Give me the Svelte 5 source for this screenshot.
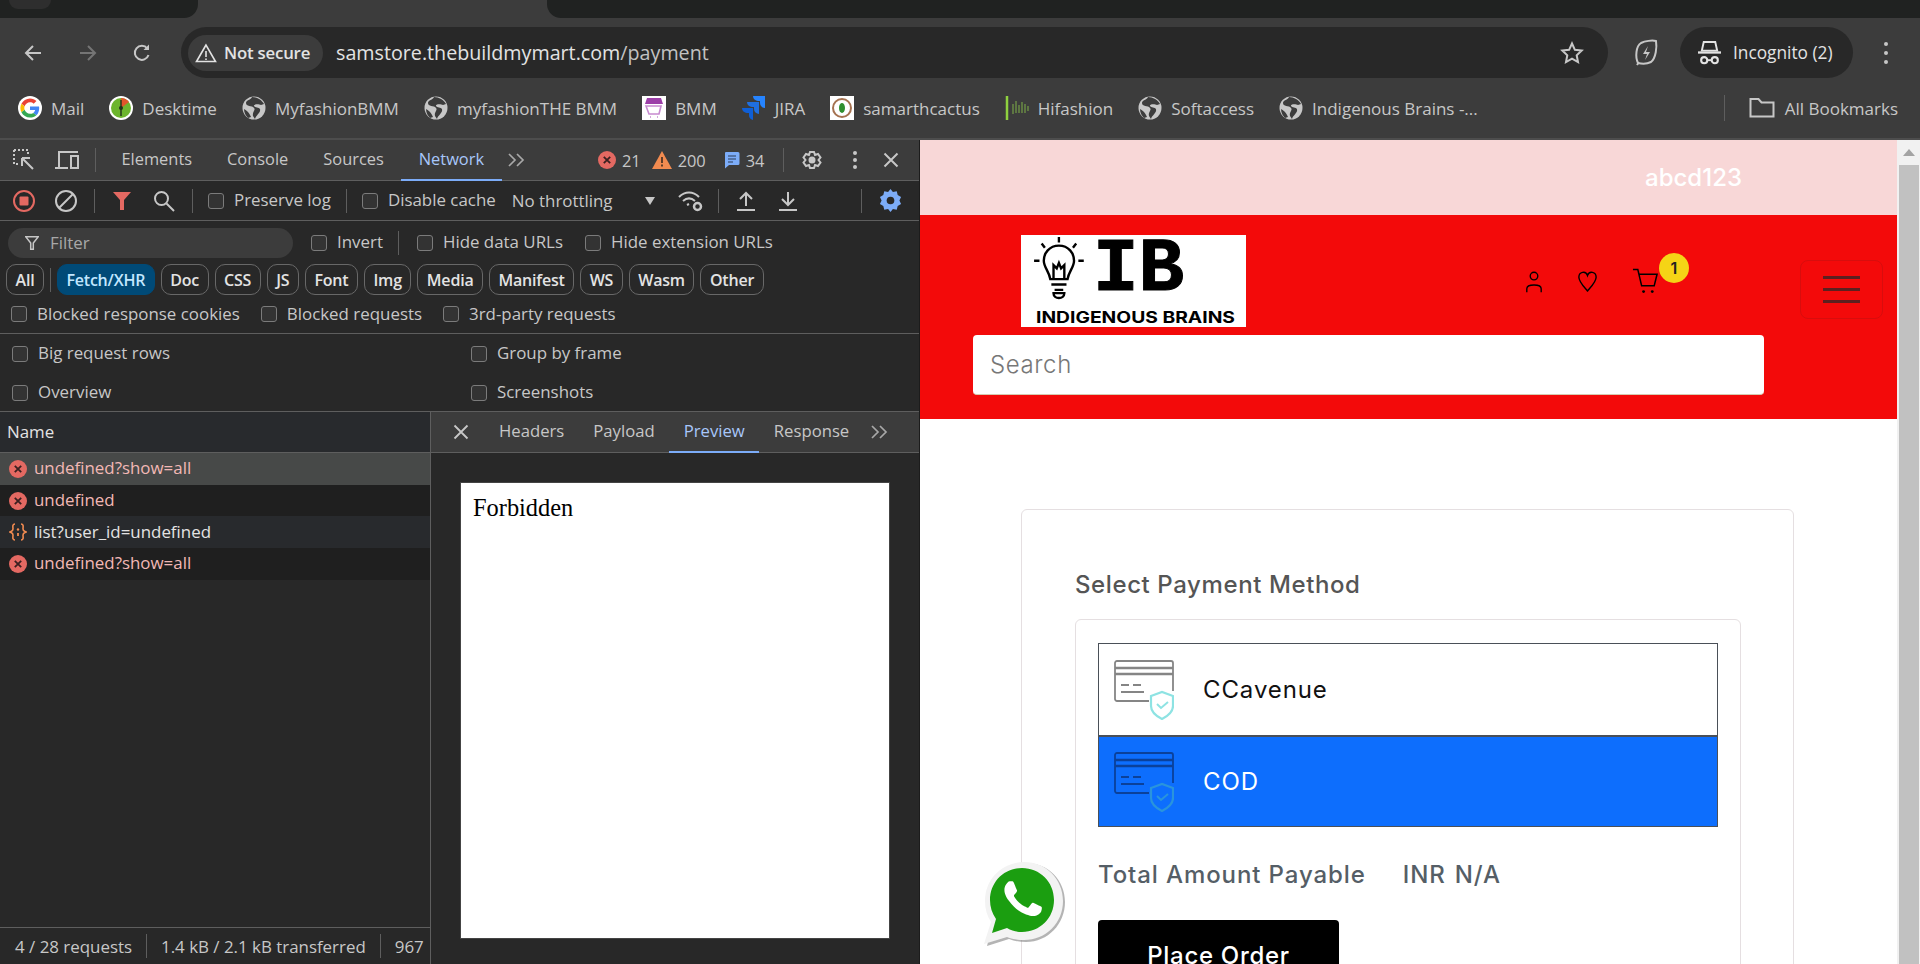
<script>
	let bookmarks = [
		{ icon: 'google', label: 'Mail' },
		{ icon: 'desktime', label: 'Desktime' },
		{ icon: 'globe', label: 'MyfashionBMM' },
		{ icon: 'globe', label: 'myfashionTHE BMM' },
		{ icon: 'bmm', label: 'BMM' },
		{ icon: 'jira', label: 'JIRA' },
		{ icon: 'sam', label: 'samarthcactus' },
		{ icon: 'hi', label: 'Hifashion' },
		{ icon: 'globe', label: 'Softaccess' },
		{ icon: 'globe', label: 'Indigenous Brains -...' }
	];
	let tabs = ['Elements', 'Console', 'Sources', 'Network'];
	let chips = ['Doc', 'CSS', 'JS', 'Font', 'Img', 'Media', 'Manifest', 'WS', 'Wasm', 'Other'];
	let requests = [
		{ name: 'undefined?show=all', kind: 'err', tone: 'sel' },
		{ name: 'undefined', kind: 'err', tone: 'odd' },
		{ name: 'list?user_id=undefined', kind: 'json', tone: 'even' },
		{ name: 'undefined?show=all', kind: 'err', tone: 'odd' }
	];
	let detail = ['Headers', 'Payload', 'Preview', 'Response'];
</script>

{#snippet errIcon()}
	<svg class="ic18" viewBox="0 0 18 18"><circle cx="9" cy="9" r="9" fill="#e46962"/><path d="M5.8 5.8l6.4 6.4M12.2 5.8l-6.4 6.4" stroke="#3a2020" stroke-width="1.8" fill="none"/></svg>
{/snippet}

{#snippet chevrons()}
	<svg class="chev" viewBox="0 0 18 14"><path d="M2 1l6 6-6 6M10 1l6 6-6 6" fill="none" stroke="#a8a8a8" stroke-width="1.7"/></svg>
{/snippet}

{#snippet card(dark)}
	<svg class="cardicon" viewBox="0 0 60 60" fill="none">
		<g stroke={dark ? '#0b419a' : '#858585'} stroke-width="1.8">
			<path d="M35 41H3a2 2 0 0 1-2-2V3a2 2 0 0 1 2-2h54a2 2 0 0 1 2 2v28"/>
			<path d="M1 8h58M1 14h58" stroke-width="2.4"/>
			<path d="M7 25h8M19 25h8M7 32h23" stroke-width="2"/>
		</g>
		<path d="M37 36l11-4 11 4v10c0 6-5 10-11 13-6-3-11-7-11-13z" stroke={dark ? '#2a94dc' : '#8ee3e3'} stroke-width="2.2"/>
		<path d="M43 44l4 4 7-6" stroke={dark ? '#2a94dc' : '#8ee3e3'} stroke-width="2"/>
	</svg>
{/snippet}

<div class="screen">
	<header class="chrome">
		<div class="strip">
			<div class="tab-left"><span class="tab-ghost"></span></div>
			<div class="tab-active"></div>
			<div class="tab-right"></div>
		</div>
		<div class="toolbar">
			<svg class="nav back" viewBox="0 0 20 20"><path d="M18 10H3M10 3l-7 7 7 7" fill="none" stroke="#c7c7c7" stroke-width="2"/></svg>
			<svg class="nav fwd" viewBox="0 0 20 20"><path d="M2 10h15M10 3l7 7-7 7" fill="none" stroke="#757575" stroke-width="2"/></svg>
			<svg class="nav reload" viewBox="0 0 20 20"><path d="M16.5 12a7 7 0 1 1-1.2-6.5" fill="none" stroke="#c7c7c7" stroke-width="2"/><path d="M17 1.5V7h-5.5z" fill="#c7c7c7"/></svg>
			<div class="omnibox">
				<div class="secure">
					<svg class="warn" viewBox="0 0 22 20"><path d="M11 2L1.5 18.5h19z M11 8v6M11 15.5v1.5" fill="none" stroke="#e3e3e3" stroke-width="1.6"/></svg>
					<span>Not secure</span>
				</div>
				<span class="url">samstore.thebuildmymart.com<span class="path">/payment</span></span>
				<svg class="star" viewBox="0 0 24 24"><path d="M12 2.500l2.900 6.300 6.800.8-5 4.700 1.300 6.800-6-3.400-6 3.400 1.300-6.800-5-4.700 6.800-.8z" fill="none" stroke="#c7c7c7" stroke-width="2"/></svg>
			</div>
			<svg class="leaf" viewBox="0 0 24 28"><path d="M4 24C1 18 2 7 7 4c4-2 11-3 15-2 1 6 0 17-5 21-4 2-9 2-13 1zM3 26l2-3" fill="none" stroke="#c7c7c7" stroke-width="2"/><path d="M14 7l-5 8h4l-2 6 5-8h-4z" fill="#c7c7c7"/></svg>
			<div class="incognito">
				<svg class="spy" viewBox="0 0 24 26"><path d="M6 2h12l2 9H4z" fill="none" stroke="#e3e3e3" stroke-width="2"/><path d="M0 13h24" stroke="#e3e3e3" stroke-width="2.400"/><circle cx="6.500" cy="21" r="3.200" fill="none" stroke="#e3e3e3" stroke-width="2.200"/><circle cx="17.500" cy="21" r="3.200" fill="none" stroke="#e3e3e3" stroke-width="2.200"/><path d="M9.500 21h5" stroke="#e3e3e3" stroke-width="2"/></svg>
				<span>Incognito (2)</span>
			</div>
			<div class="kebab"><i></i><i></i><i></i></div>
		</div>
		<div class="bookmarks">
			{#each bookmarks as b}
				<div class="bm">
					{#if b.icon === 'google'}
						<svg class="bmi" viewBox="-6 -6 60 60"><circle cx="24" cy="24" r="30" fill="#fff"/><path fill="#EA4335" d="M24 9.5c3.54 0 6.71 1.22 9.21 3.6l6.85-6.85C35.9 2.38 30.47 0 24 0 14.62 0 6.51 5.38 2.56 13.22l7.98 6.19C12.43 13.72 17.74 9.5 24 9.5z"/><path fill="#4285F4" d="M46.98 24.55c0-1.57-.15-3.09-.38-4.55H24v9.02h12.94c-.58 2.96-2.26 5.48-4.78 7.18l7.73 6c4.51-4.18 7.09-10.36 7.09-17.65z"/><path fill="#FBBC05" d="M10.53 28.59c-.48-1.45-.76-2.99-.76-4.59s.27-3.14.76-4.59l-7.98-6.19C.92 16.46 0 20.12 0 24c0 3.88.92 7.54 2.56 10.78l7.97-6.19z"/><path fill="#34A853" d="M24 48c6.48 0 11.93-2.13 15.89-5.81l-7.73-6c-2.15 1.45-4.92 2.3-8.16 2.3-6.26 0-11.57-4.22-13.47-9.91l-7.98 6.19C6.51 42.62 14.62 48 24 48z"/></svg>
					{:else if b.icon === 'desktime'}
						<svg class="bmi" viewBox="0 0 24 24"><circle cx="12" cy="12" r="12" fill="#fff"/><circle cx="12" cy="12" r="10" fill="#6cb52d"/><path d="M12 12V2a10 10 0 0 1 8 4z" fill="#e0562c"/><path d="M12 4v16" stroke="#20301a" stroke-width="1.400"/><circle cx="12" cy="12" r="2" fill="#20301a"/></svg>
					{:else if b.icon === 'globe'}
						<svg class="bmi globe" viewBox="0 0 24 24"><circle cx="12" cy="12" r="11.500" fill="#c7c7c7"/><path d="M10 1c-1 3-6 3-6 6 0 4 6 2 8 5 2 2-2 4-1 8l2 3c1-4 6-6 5-10-1-2-5-1-6-3s5-2 7-1l3-1c-2-4-7-7-12-7zM2 13c2 1 5 3 7 8l-3 1c-2-2-4-5-4-9z" fill="#3c3c3c"/></svg>
					{:else if b.icon === 'bmm'}
						<svg class="bmi" viewBox="0 0 24 24"><rect width="24" height="24" fill="#fff"/><path d="M5 2h14l2 6H3z" fill="#9c3fa8"/><path d="M4 10h15l-2 8H7zM8 21h1M15 21h1" fill="none" stroke="#c78ad0" stroke-width="1.600"/></svg>
					{:else if b.icon === 'jira'}
						<svg class="bmi" viewBox="0 0 24 24"><path d="M23 0H11a5 5 0 0 0 5 5h2v2a5 5 0 0 0 5 5z" fill="#2684ff"/><path d="M17 6H5a5 5 0 0 0 5 5h2v2a5 5 0 0 0 5 5z" fill="#1f6fe0"/><path d="M11 12H0a5 5 0 0 0 5 5h2v2a5 5 0 0 0 4 5z" fill="#0f5fd6"/></svg>
					{:else if b.icon === 'sam'}
						<svg class="bmi" viewBox="0 0 24 24"><rect width="24" height="24" fill="#fff"/><circle cx="12" cy="12" r="9" fill="none" stroke="#a57250" stroke-width="2"/><ellipse cx="12" cy="12" rx="3" ry="5" fill="#2f8f2f"/></svg>
					{:else}
						<svg class="bmi" viewBox="0 0 24 24"><path d="M2 0v24" stroke="#8fd13f" stroke-width="2.500"/><path d="M8 8v10M11 5v12M14 9v8M17 6v11M20 8v9M23 10v5" stroke="#6c8f45" stroke-width="1.400"/></svg>
					{/if}
					<span>{b.label}</span>
				</div>
			{/each}
			<div class="bm-end">
				<i class="bm-sep"></i>
				<svg class="folder" viewBox="0 0 26 22"><path d="M1.500 19.500V2h8l3 3.500h12v14z" fill="none" stroke="#c7c7c7" stroke-width="2"/></svg>
				<span>All Bookmarks</span>
			</div>
		</div>
	</header>

	<div class="split">
		<section class="devtools">
			<div class="dt-top">
				<svg class="i-inspect" viewBox="0 0 22 22" fill="none"><path d="M1 1h14v4M1 1v14h4" stroke="#c7c7c7" stroke-width="2" stroke-dasharray="2 2"/><path d="M9 9h8M9 9v8M9 9l11 11" stroke="#c7c7c7" stroke-width="2"/></svg>
				<svg class="i-device" viewBox="0 0 24 20" fill="none"><path d="M4 18V2h19" stroke="#c7c7c7" stroke-width="2"/><path d="M0 18h13" stroke="#c7c7c7" stroke-width="2"/><rect x="16" y="6" width="7" height="12" stroke="#c7c7c7" stroke-width="2"/></svg>
				<i class="vsep first"></i>
				{#each tabs as t}
					<span class="dtab" class:on={t === 'Network'}>{t}</span>
				{/each}
				<span class="more">{@render chevrons()}</span>
				<div class="counts">
					{@render errIcon()}<span class="n">21</span>
					<svg class="tri" viewBox="0 0 20 18"><path d="M10 0l10 18H0z" fill="#f28b50"/><path d="M10 6v6M10 13.500v2" stroke="#3a2a20" stroke-width="1.600"/></svg><span class="n">200</span>
					<svg class="msg" viewBox="0 0 16 18"><path d="M2 1h12a1.500 1.500 0 0 1 1.500 1.500v10a1.500 1.500 0 0 1-1.500 1.500H5l-4 3.500V2a1 1 0 0 1 1-1z" fill="#7cacf8"/><path d="M4 5h8M4 8h8M4 11h5" stroke="#2a3a55" stroke-width="1.200"/></svg><span class="n last">34</span>
				</div>
				<i class="vsep tail"></i>
				<svg class="i-gear" viewBox="0 0 24 24" fill="none"><path d="M10 1h4l1 3 3-1 2.500 3.500-2 2.500 2 2.500L18 15l-3-1-1 3h-4l-1-3-3 1-2.500-3.500 2-2.500-2-2.500L6 3l3 1z" transform="translate(0 3)" stroke="#c7c7c7" stroke-width="2"/><circle cx="12" cy="12" r="3.500" fill="#c7c7c7"/></svg>
				<div class="dots"><i></i><i></i><i></i></div>
				<svg class="i-x" viewBox="0 0 16 16"><path d="M1.500 1.500l13 13M14.500 1.500l-13 13" stroke="#c7c7c7" stroke-width="2"/></svg>
			</div>

			<div class="dt-row r2">
				<svg class="i22" viewBox="0 0 22 22"><circle cx="11" cy="11" r="10" fill="none" stroke="#e46962" stroke-width="2"/><rect x="6.500" y="6.500" width="9" height="9" rx="1" fill="#e46962"/></svg>
				<svg class="i22 clear" viewBox="0 0 22 22" fill="none"><circle cx="11" cy="11" r="10" stroke="#c7c7c7" stroke-width="2"/><path d="M4 18L18 4" stroke="#c7c7c7" stroke-width="2"/></svg>
				<i class="vsep s1"></i>
				<svg class="funnel" viewBox="0 0 18 18"><path d="M0 0h18l-7 8v10H7V8z" fill="#e46962"/></svg>
				<svg class="i22 lens" viewBox="0 0 22 22" fill="none"><circle cx="8.500" cy="8.500" r="6.500" stroke="#c7c7c7" stroke-width="2"/><path d="M13.500 13.500L21 21" stroke="#c7c7c7" stroke-width="2"/></svg>
				<i class="vsep s2"></i>
				<label class="ck c1"><i></i>Preserve log</label>
				<i class="vsep s3"></i>
				<label class="ck c2"><i></i>Disable cache</label>
				<span class="throttle">No throttling</span>
				<span class="caret"></span>
				<svg class="wifi" viewBox="0 0 25 22" fill="none"><path d="M1 7c6-6 14-6 20 0M5 11c4-3.500 8-3.500 12 0M9 15l2-1" stroke="#c7c7c7" stroke-width="2"/><circle cx="19.500" cy="16.500" r="3.500" stroke="#c7c7c7" stroke-width="2.500"/></svg>
				<i class="vsep s4"></i>
				<svg class="arrow up" viewBox="0 0 18 20" fill="none"><path d="M9 15V2M3 8l6-6 6 6M0 19h18" stroke="#c7c7c7" stroke-width="2"/></svg>
				<svg class="arrow down" viewBox="0 0 18 20" fill="none"><path d="M9 1v13M3 8l6 6 6-6M0 19h18" stroke="#c7c7c7" stroke-width="2"/></svg>
				<i class="vsep s5"></i>
				<svg class="i-cog" viewBox="0 0 24 24"><path d="M12 0l2.500 3.200 4-.9 1 4 3.500 2-1.700 3.700 1.700 3.700-3.500 2-1 4-4-.9L12 24l-2.500-3.200-4 .9-1-4-3.500-2L2.700 12 1 8.300l3.500-2 1-4 4 .9z" fill="#7cacf8"/><circle cx="12" cy="12" r="4" fill="#282828"/></svg>
			</div>

			<div class="dt-row r3">
				<div class="filter">
					<svg viewBox="0 0 14 14"><path d="M.7.7h12.600L8.300 7v6.300H5.700V7z" fill="none" stroke="#c7c7c7" stroke-width="1.500"/></svg>
					<span>Filter</span>
				</div>
				<label class="ck c3"><i></i>Invert</label>
				<i class="vsep s6"></i>
				<label class="ck c4"><i></i>Hide data URLs</label>
				<label class="ck c5"><i></i>Hide extension URLs</label>
			</div>

			<div class="chips">
				<span class="chip">All</span>
				<i class="vsep chipsep"></i>
				<span class="chip active">Fetch/XHR</span>
				{#each chips as c}<span class="chip">{c}</span>{/each}
			</div>

			<div class="dt-row r5">
				<label class="ck"><i></i>Blocked response cookies</label>
				<label class="ck"><i></i>Blocked requests</label>
				<label class="ck"><i></i>3rd-party requests</label>
			</div>

			<div class="settings">
				<label class="ck"><i></i>Big request rows</label>
				<label class="ck"><i></i>Group by frame</label>
				<label class="ck"><i></i>Overview</label>
				<label class="ck"><i></i>Screenshots</label>
			</div>

			<div class="panes">
				<div class="list">
					<div class="name-head">Name</div>
					{#each requests as r}
						<div class="req {r.tone}" class:bad={r.kind === 'err'}>
							{#if r.kind === 'err'}
								{@render errIcon()}
							{:else}
								<svg class="ic18" viewBox="0 0 18 18" fill="none"><path d="M6 1C3 1 4 4 4 6S3 8 1 9c2 1 3 1 3 3s-1 5 2 5M12 1c3 0 2 3 2 5s1 2 3 3c-2 1-3 1-3 3s1 5-2 5" stroke="#f28b50" stroke-width="1.600"/><circle cx="9" cy="6.500" r="1.200" fill="#f28b50"/><path d="M9 10v3" stroke="#f28b50" stroke-width="1.800"/></svg>
							{/if}
							<span>{r.name}</span>
						</div>
					{/each}
					<div class="list-fill"></div>
					<div class="summary">
						<span>4 / 28 requests</span><i></i>
						<span>1.4 kB / 2.1 kB transferred</span><i></i>
						<span class="clip">967</span>
					</div>
				</div>
				<div class="detail">
					<div class="detail-tabs">
						<svg class="detail-x" viewBox="0 0 16 16"><path d="M1.500 1.500l13 13M14.500 1.500l-13 13" stroke="#c7c7c7" stroke-width="1.800"/></svg>
						{#each detail as d}
							<span class="dd" class:on={d === 'Preview'}>{d}</span>
						{/each}
						<span class="more2">{@render chevrons()}</span>
					</div>
					<div class="preview">Forbidden</div>
				</div>
			</div>
		</section>

		<section class="page">
			<div class="promo"><span>abcd123</span></div>
			<div class="masthead">
				<div class="brandrow">
					<svg class="logo" viewBox="0 0 225 92">
						<rect width="225" height="92" fill="#fff"/>
						<g fill="none" stroke="#000" stroke-width="2.200" transform="translate(12 2) scale(1.080)">
							<path d="M24 8c-9 0-14 7-14 14 0 6 5 10 6 17h16c1-7 6-11 6-17 0-7-5-14-14-14z"/>
							<path d="M19 38V26l3 3 2-5 2 5 3-3v12"/>
							<path d="M17 44h14M20 49h8M19 52c0 6 10 6 10 0z"/>
							<path d="M24 0v5M8 6l3 4M40 6l-3 4M1 22h5M42 22h5"/>
						</g>
						<text x="72" y="55" class="lg-ib">IB</text>
						<text x="15" y="88" class="lg-name" textLength="199" lengthAdjust="spacingAndGlyphs">INDIGENOUS BRAINS</text>
					</svg>
					<svg class="h-user" viewBox="0 0 20 26" fill="none"><circle cx="10" cy="6" r="4.500" stroke="#000" stroke-width="1.600"/><path d="M1.500 25v-4c0-6 17-6 17 0v4" stroke="#000" stroke-width="1.600"/></svg>
					<svg class="h-heart" viewBox="0 0 22 24" fill="none"><path d="M11 23C6 17 1 12 1 7c0-6 8-8 10-2 2-6 10-4 10 2 0 5-5 10-10 16z" stroke="#000" stroke-width="1.600"/></svg>
					<div class="cart">
						<svg viewBox="0 0 28 26" fill="none"><path d="M1 1h5l4 17h13l3-12H7" stroke="#000" stroke-width="1.600"/><circle cx="12" cy="24" r="1.500" fill="#000"/><circle cx="21" cy="24" r="1.500" fill="#000"/></svg>
						<span class="badge">1</span>
					</div>
					<button class="burger" aria-label="menu"><i></i><i></i><i></i></button>
				</div>
				<div class="search">Search</div>
			</div>
			<div class="content">
				<div class="paycard">
					<h3>Select Payment Method</h3>
					<div class="methods">
						<div class="options">
							<div class="opt">{@render card(false)}<span>CCavenue</span></div>
							<div class="opt picked">{@render card(true)}<span>COD</span></div>
						</div>
						<div class="total"><span>Total Amount Payable</span><span class="inr">INR</span><span class="na">N/A</span></div>
						<div class="place"><span>Place Order</span></div>
					</div>
				</div>
			</div>
			<svg class="wa" viewBox="0 0 82 85">
				<path d="M41 1C19 1 2 18 2 40c0 8 2 15 6 21L2 84l22-7c5 2 11 3 17 3 22 0 39-18 39-40S63 1 41 1z" fill="#777" transform="translate(2 1)" opacity=".55"/>
				<path d="M41 1C19 1 2 18 2 40c0 8 2 15 6 21L1 83l23-7c5 2 11 3 17 3 22 0 39-17 39-39S63 1 41 1z" fill="#f3f3f3"/>
				<path d="M39 7C21 7 7 21 7 39c0 7 2 13 6 19l-4 14 15-5c5 3 10 4 15 4 18 0 32-14 32-32S57 7 39 7z" fill="#1b9e10"/>
				<g transform="translate(2.800 .5) scale(3.100)"><path fill="#fff" d="M17.472 14.382c-.297-.149-1.758-.867-2.030-.967-.273-.099-.471-.148-.67.150-.197.297-.767.966-.940 1.164-.173.199-.347.223-.644.075-.297-.150-1.255-.463-2.390-1.475-.883-.788-1.480-1.761-1.653-2.059-.173-.297-.018-.458.130-.606.134-.133.298-.347.446-.520.149-.174.198-.298.298-.497.099-.198.050-.371-.025-.520-.075-.149-.669-1.612-.916-2.207-.242-.579-.487-.500-.669-.510-.173-.008-.371-.010-.570-.010-.198 0-.520.074-.792.372-.272.297-1.040 1.016-1.040 2.479 0 1.462 1.065 2.875 1.213 3.074.149.198 2.096 3.200 5.077 4.487.709.306 1.262.489 1.694.625.712.227 1.360.195 1.871.118.571-.085 1.758-.719 2.006-1.413.248-.694.248-1.289.173-1.413-.074-.124-.272-.198-.570-.347z"/></g>
			</svg>
		</section>

		<aside class="scrollbar">
			<div class="sb-up"><span></span></div>
			<div class="sb-thumb"></div>
		</aside>
	</div>
</div>

<style>
	:global(body) {
		margin: 0;
		background: #282828;
	}
	.screen {
		width: 1920px;
		height: 964px;
		overflow: hidden;
		font-family: "Open Sans", Roboto, sans-serif;
		color: #c7c7c7;
	}
	i {
		display: block;
		font-style: normal;
	}

	/* browser frame */
	.chrome {
		height: 140px;
		background: #3c3c3c;
		box-sizing: border-box;
		border-bottom: 2px solid #4d4d4d;
	}
	.strip {
		height: 18px;
		display: flex;
		background: #3c3c3c;
	}
	.tab-left {
		width: 198px;
		background: #202221;
		border-radius: 0 0 14px 0;
	}
	.tab-ghost {
		display: block;
		width: 42px;
		height: 9px;
		margin-left: 9px;
		background: #2e2e2e;
		border-radius: 0 0 10px 10px;
	}
	.tab-active {
		width: 349px;
	}
	.tab-right {
		flex: 1;
		background: #202221;
		border-radius: 0 0 0 14px;
	}
	.toolbar {
		height: 60px;
		display: flex;
		align-items: center;
		box-sizing: border-box;
	}
	.nav {
		width: 20px;
		height: 20px;
		margin-top: 10px;
	}
	.back { margin-left: 23px; }
	.fwd { margin-left: 35px; }
	.reload { margin-left: 34px; }
	.omnibox {
		margin-left: 29px;
		margin-top: 9px;
		width: 1427px;
		height: 51px;
		background: #282828;
		border-radius: 26px;
		display: flex;
		align-items: center;
		box-sizing: border-box;
		padding-left: 7px;
	}
	.secure {
		width: 135px;
		height: 36px;
		background: #3c3c3c;
		border-radius: 18px;
		display: flex;
		align-items: center;
		gap: 7px;
		padding-left: 7px;
		box-sizing: border-box;
		color: #e3e3e3;
		font-size: 16.800px;
		font-weight: 600;
		letter-spacing: -.2px;
		white-space: nowrap;
	}
	.warn {
		width: 22px;
		height: 20px;
		flex: none;
	}
	.url {
		margin-left: 13px;
		font-size: 19.700px;
		color: #e3e3e3;
	}
	.path {
		color: #c2c2c2;
	}
	.star {
		margin-left: auto;
		margin-right: 24px;
		width: 24px;
		height: 24px;
	}
	.leaf {
		margin-left: 26px;
		margin-top: 9px;
		width: 24px;
		height: 28px;
	}
	.incognito {
		margin-left: 22px;
		margin-top: 9px;
		width: 173px;
		height: 51px;
		background: #282828;
		border-radius: 26px;
		display: flex;
		align-items: center;
		gap: 12px;
		padding-left: 18px;
		box-sizing: border-box;
		font-size: 17.300px;
		color: #e3e3e3;
	}
	.spy {
		width: 23px;
		height: 25px;
	}
	.kebab {
		margin-left: 31px;
		margin-top: 9px;
		display: flex;
		flex-direction: column;
		gap: 5px;
	}
	.kebab i,
	.dots i {
		width: 4px;
		height: 4px;
		background: #c7c7c7;
		border-radius: 50%;
	}
	.bookmarks {
		height: 60px;
		display: flex;
		align-items: center;
		padding-left: 18px;
		gap: 25px;
		font-size: 17px;
		color: #c7c7c7;
	}
	.bm {
		display: flex;
		align-items: center;
		gap: 9px;
	}
	.bmi {
		width: 24px;
		height: 24px;
		display: block;
	}
	.bm-end {
		margin-left: auto;
		display: flex;
		align-items: center;
		padding-right: 22px;
	}
	.bm-sep {
		width: 1px;
		height: 26px;
		background: #5e5e5e;
		margin-right: 24px;
	}
	.folder {
		width: 26px;
		height: 22px;
		margin-right: 10px;
	}

	.split {
		height: 824px;
		display: flex;
	}

	/* devtools */
	.devtools {
		width: 920px;
		flex: none;
		display: flex;
		flex-direction: column;
		background: #282828;
		border-right: 1px solid #1c1c1c;
		box-sizing: border-box;
		font-size: 16.900px;
	}
	.dt-top {
		height: 41px;
		flex: none;
		box-sizing: border-box;
		background: #3c3c3c;
		border-bottom: 1px solid #5e5e5e;
		display: flex;
		align-items: center;
		padding: 0 20px 0 13px;
		font-size: 16.400px;
	}
	.i-inspect { width: 22px; height: 22px; }
	.i-device { width: 24px; height: 20px; margin-left: 20px; }
	.vsep {
		width: 1px;
		height: 24px;
		background: #5e5e5e;
		flex: none;
	}
	.vsep.first { margin-left: 16px; margin-right: 8px; }
	.dtab {
		padding: 0 17.500px 2px;
		height: 100%;
		display: flex;
		align-items: center;
		box-sizing: border-box;
		border-bottom: 2px solid transparent;
		margin-bottom: -1px;
	}
	.dtab.on {
		color: #a8c7fa;
		border-bottom-color: #7cacf8;
	}
	.more { margin-left: 5px; display: flex; }
	.chev { width: 18px; height: 14px; }
	.counts {
		margin-left: auto;
		display: flex;
		align-items: center;
	}
	.ic18 { width: 18px; height: 18px; flex: none; }
	.n { margin-left: 6px; margin-right: 11px; }
	.n.last { margin-right: 0; }
	.tri { width: 20px; height: 18px; }
	.msg { width: 16px; height: 18px; margin-left: 7px; }
	.vsep.tail { margin-left: 18px; }
	.i-gear { width: 24px; height: 24px; margin-left: 16px; }
	.dots {
		margin-left: 29px;
		display: flex;
		flex-direction: column;
		gap: 3px;
	}
	.i-x { width: 16px; height: 16px; margin-left: 26.500px; }

	.dt-row {
		display: flex;
		align-items: center;
		flex: none;
	}
	.r2 {
		height: 39px;
		border-bottom: 1px solid #5e5e5e;
		padding: 0 17px 0 13px;
	}
	.i22 { width: 22px; height: 22px; flex: none; }
	.clear { margin-left: 20px; }
	.vsep.s1 { margin-left: 17px; }
	.funnel { width: 18px; height: 18px; margin-left: 18px; }
	.lens { margin-left: 22px; }
	.vsep.s2 { margin-left: 17px; }
	.ck {
		display: flex;
		align-items: center;
		gap: 10px;
		white-space: nowrap;
		line-height: 22px;
		padding-bottom: 1px;
	}
	.ck i {
		width: 14px;
		height: 14px;
		border: 1.500px solid #7b7b7b;
		border-radius: 3px;
		background: #333;
		flex: none;
		margin-top: 1px;
	}
	.c1 { margin-left: 15px; }
	.vsep.s3 { margin-left: 15px; }
	.c2 { margin-left: 15px; }
	.throttle { margin-left: 16px; padding-bottom: 1px; }
	.caret {
		margin-left: 32px;
		width: 0;
		height: 0;
		border-left: 5.500px solid transparent;
		border-right: 5.500px solid transparent;
		border-top: 8px solid #c7c7c7;
	}
	.wifi { width: 25px; height: 22px; margin-left: 23px; }
	.vsep.s4 { margin-left: 15px; }
	.arrow { width: 18px; height: 20px; }
	.up { margin-left: 18px; }
	.down { margin-left: 24px; }
	.vsep.s5 { margin-left: auto; }
	.i-cog { width: 23px; height: 23px; margin-left: 17px; }

	.r3 {
		height: 43px;
		padding-left: 8px;
	}
	.filter {
		width: 285px;
		height: 30px;
		background: #3c3c3c;
		border-radius: 15px;
		display: flex;
		align-items: center;
		padding-left: 17px;
		gap: 11px;
		box-sizing: border-box;
	}
	.filter svg { width: 14px; height: 14px; }
	.filter span { color: #a8a8a8; padding-bottom: 1px; }
	.c3 { margin-left: 18px; }
	.vsep.s6 { margin-left: 15px; }
	.c4 { margin-left: 18px; }
	.c5 { margin-left: 22px; }

	.chips {
		height: 31px;
		flex: none;
		display: flex;
		align-items: center;
		gap: 6px;
		padding-left: 6px;
	}
	.chip {
		height: 31px;
		box-sizing: border-box;
		border: 1px solid #686868;
		border-radius: 10px;
		padding: 0 8.500px;
		display: flex;
		align-items: center;
		font-size: 16px;
		font-weight: 600;
		letter-spacing: -.2px;
		color: #e3e3e3;
	}
	.chip.active {
		background: #004a77;
		border-color: #004a77;
		color: #c2e7ff;
	}
	.r5 {
		height: 38px;
		padding-left: 11px;
		gap: 21px;
		border-bottom: 1px solid #5e5e5e;
	}
	.settings {
		height: 78px;
		flex: none;
		box-sizing: border-box;
		display: grid;
		grid-template-columns: 459px 1fr;
		grid-auto-rows: 39px;
		padding-left: 12px;
		border-bottom: 1px solid #5e5e5e;
		align-items: center;
	}

	.panes {
		flex: 1;
		display: flex;
		min-height: 0;
	}
	.list {
		width: 431px;
		flex: none;
		box-sizing: border-box;
		border-right: 1px solid #5e5e5e;
		display: flex;
		flex-direction: column;
	}
	.name-head {
		height: 41px;
		flex: none;
		box-sizing: border-box;
		background: #282a2d;
		border-bottom: 1px solid #5e5e5e;
		padding: 0 0 2px 7px;
		display: flex;
		align-items: center;
		color: #e3e3e3;
	}
	.req {
		height: 31.700px;
		flex: none;
		display: flex;
		align-items: center;
		gap: 7px;
		padding-left: 9px;
		color: #e3e3e3;
	}
	.req span { padding-bottom: 2px; }
	.req.bad { color: #f2b8b5; }
	.sel { background: #474948; }
	.odd { background: #1f1f1f; }
	.even { background: #282a2d; }
	.list-fill { flex: 1; }
	.summary {
		height: 37px;
		flex: none;
		box-sizing: border-box;
		border-top: 1px solid #5e5e5e;
		display: flex;
		align-items: center;
		padding-left: 15px;
		white-space: nowrap;
		overflow: hidden;
	}
	.summary i {
		width: 1px;
		height: 24px;
		background: #5e5e5e;
		margin: 0 14px;
		flex: none;
	}
	.clip { flex: none; }
	.detail {
		flex: 1;
		display: flex;
		flex-direction: column;
		min-width: 0;
	}
	.detail-tabs {
		height: 41px;
		flex: none;
		box-sizing: border-box;
		background: #3c3c3c;
		border-bottom: 1px solid #5e5e5e;
		display: flex;
		align-items: center;
		padding-left: 22px;
	}
	.detail-x { width: 16px; height: 16px; margin-right: 15.500px; }
	.dd {
		padding: 0 14.500px 2px;
		height: 100%;
		display: flex;
		align-items: center;
		box-sizing: border-box;
		border-bottom: 2px solid transparent;
		margin-bottom: -1px;
		font-size: 16.700px;
	}
	.dd.on {
		color: #a8c7fa;
		border-bottom-color: #7cacf8;
	}
	.more2 { margin-left: 6px; display: flex; }
	.preview {
		margin: 30px 0 26px 30px;
		width: 428px;
		flex: 1;
		background: #fff;
		box-sizing: border-box;
		box-shadow: 0 0 0 1px #444;
		padding: 11px 12px;
		font-family: "Liberation Serif", serif;
		font-size: 24.400px;
		line-height: 28px;
		color: #000;
	}

	/* storefront */
	.page {
		width: 977px;
		flex: none;
		background: #fff;
		position: relative;
		overflow: hidden;
		font-family: Inter, "Open Sans", sans-serif;
	}
	.promo {
		height: 75px;
		background: #f8d7d7;
		display: flex;
		align-items: center;
		justify-content: flex-end;
		padding-right: 155px;
		box-sizing: border-box;
		color: #fff;
		font-size: 24px;
		font-weight: 500;
	}
	.masthead {
		height: 204px;
		background: #f30a0a;
		box-sizing: border-box;
		padding-top: 20px;
	}
	.brandrow {
		height: 92px;
		display: flex;
		align-items: flex-start;
		padding-left: 101px;
	}
	.logo { width: 225px; height: 92px; flex: none; }
	.lg-ib {
		font-family: "Liberation Mono", monospace;
		font-weight: 700;
		font-size: 76px;
		stroke: #000;
		stroke-width: 1px;
	}
	.lg-name {
		font-family: Inter, sans-serif;
		font-weight: 700;
		font-size: 15.500px;
	}
	.h-user { width: 18px; height: 22px; margin: 36px 0 0 279px; flex: none; }
	.h-heart { width: 19px; height: 23px; margin: 35px 0 0 35px; flex: none; }
	.cart { position: relative; margin: 33px 0 0 35px; width: 27px; height: 26px; flex: none; }
	.cart svg { width: 27px; height: 26px; display: block; }
	.badge {
		position: absolute;
		left: 27px;
		top: -15px;
		width: 30px;
		height: 30px;
		border-radius: 50%;
		background: #f5d416;
		color: #222;
		font-size: 16px;
		font-weight: 600;
		display: flex;
		align-items: center;
		justify-content: center;
	}
	.burger {
		margin: 25px 14px 0 auto;
		width: 83px;
		height: 59px;
		background: transparent;
		border: 1px solid #d80d0d;
		border-radius: 8px;
		display: flex;
		flex-direction: column;
		align-items: center;
		justify-content: center;
		gap: 9px;
		padding: 0;
	}
	.burger i {
		width: 37px;
		height: 3px;
		background: #5c2020;
	}
	.search {
		margin: 8px 0 0 53px;
		width: 791px;
		height: 60px;
		box-sizing: border-box;
		background: #fff;
		border-radius: 4px;
		border-bottom: 1px solid #d6c9b0;
		padding-left: 17px;
		display: flex;
		align-items: center;
		font-size: 24px;
		font-weight: 300;
		letter-spacing: .6px;
		color: #777;
	}
	.content {
		padding: 90px 0 0 101px;
	}
	.paycard {
		width: 773px;
		height: 700px;
		box-sizing: border-box;
		border: 1px solid #e5dfe1;
		border-radius: 6px;
		padding: 58px 0 0 53px;
	}
	h3 {
		margin: 0;
		font-size: 24px;
		line-height: 34px;
		font-weight: 500;
		letter-spacing: .6px;
		color: #555;
	}
	.methods {
		margin-top: 17px;
		width: 666px;
		height: 500px;
		box-sizing: border-box;
		border: 1px solid #e5dfe1;
		border-radius: 6px;
		padding: 23px 0 0 22px;
	}
	.options {
		width: 620px;
		border: 1px solid #4a5058;
		box-sizing: border-box;
	}
	.opt {
		height: 91px;
		display: flex;
		align-items: center;
		padding-left: 15px;
		font-size: 24px;
		letter-spacing: .9px;
		color: #111;
		box-sizing: border-box;
	}
	.opt span { margin-left: 29px; }
	.opt.picked {
		background: #0d6efd;
		color: #fff;
		border-top: 2px solid #4a5058;
	}
	.cardicon { width: 60px; height: 60px; flex: none; }
	.total {
		margin-top: 26px;
		display: flex;
		align-items: center;
		height: 42px;
		font-size: 24px;
		font-weight: 500;
		letter-spacing: .9px;
		color: #555e66;
	}
	.inr { margin-left: 37px; }
	.na { margin-left: 9px; }
	.place {
		margin-top: 25px;
		width: 241px;
		height: 70px;
		background: #000;
		color: #fff;
		border-radius: 4px;
		display: flex;
		align-items: center;
		justify-content: center;
		font-size: 24px;
		font-weight: 500;
		letter-spacing: .7px;
	}
	.wa {
		position: absolute;
		left: 63px;
		top: 721px;
		width: 82px;
		height: 85px;
	}

	.scrollbar {
		flex: 1;
		background: #f1f1f1;
		display: flex;
		flex-direction: column;
	}
	.sb-up {
		height: 25px;
		display: flex;
		align-items: center;
		justify-content: center;
	}
	.sb-up span {
		width: 0;
		height: 0;
		border-left: 6px solid transparent;
		border-right: 6px solid transparent;
		border-bottom: 7px solid #a3a3a3;
	}
	.sb-thumb {
		flex: 1;
		margin: 0 1px 0 2px;
		background: #c1c1c1;
	}
</style>
